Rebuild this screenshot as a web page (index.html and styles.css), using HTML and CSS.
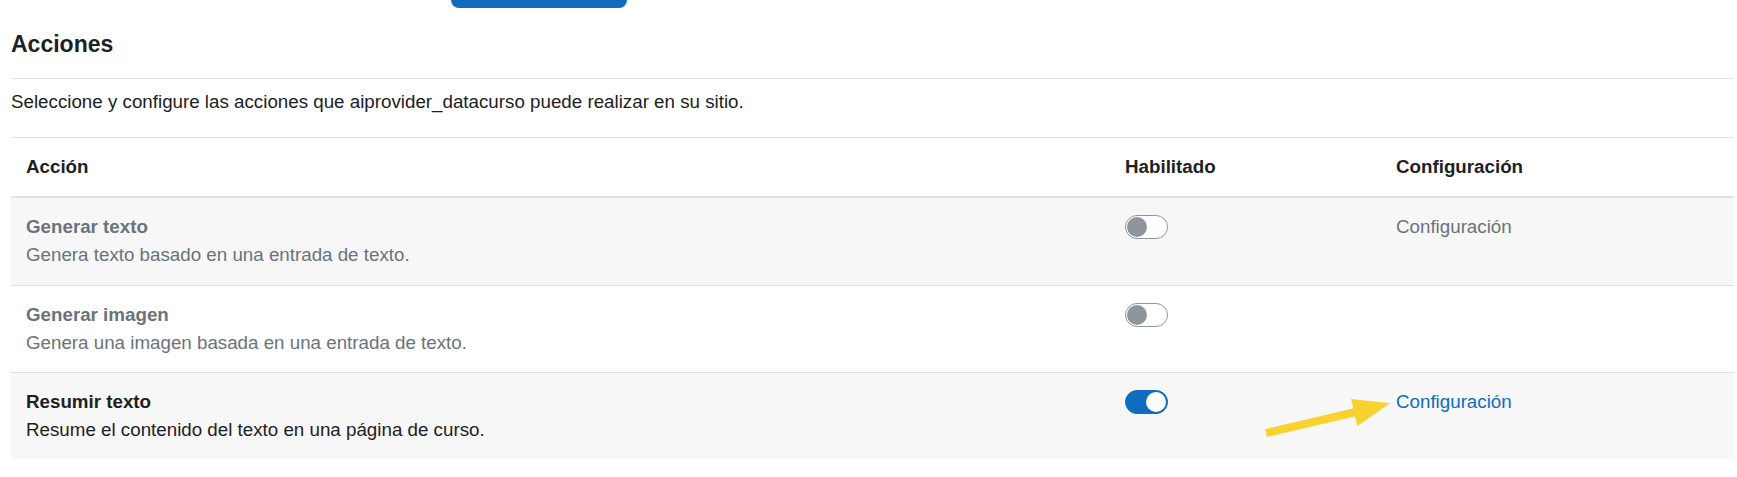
FILE: index.html
```html
<!DOCTYPE html>
<html lang="es">
<head>
<meta charset="utf-8">
<title>Acciones</title>
<link rel="stylesheet" href="styles.css">
</head>
<body>
<div class="page">
  <div class="topbtn"></div>
  <h3 class="title">Acciones</h3>
  <hr class="rule">
  <p class="intro">Seleccione y configure las acciones que aiprovider_datacurso puede realizar en su sitio.</p>
  <table class="actions">
    <colgroup>
      <col class="c1">
      <col class="c2">
      <col class="c3">
    </colgroup>
    <thead>
      <tr>
        <th>Acción</th>
        <th>Habilitado</th>
        <th>Configuración</th>
      </tr>
    </thead>
    <tbody>
      <tr class="striped off">
        <td><span class="name">Generar texto</span><span class="desc">Genera texto basado en una entrada de texto.</span></td>
        <td><div class="switchline"><span class="switch"><span class="knob"></span></span></div></td>
        <td><a class="cfg" href="#">Configuración</a></td>
      </tr>
      <tr class="off">
        <td><span class="name">Generar imagen</span><span class="desc">Genera una imagen basada en una entrada de texto.</span></td>
        <td><div class="switchline"><span class="switch"><span class="knob"></span></span></div></td>
        <td></td>
      </tr>
      <tr class="striped">
        <td><span class="name">Resumir texto</span><span class="desc">Resume el contenido del texto en una página de curso.</span></td>
        <td><div class="switchline"><span class="switch on"><span class="knob"></span></span></div></td>
        <td><a class="cfg" href="#">Configuración</a></td>
      </tr>
    </tbody>
  </table>
  <svg class="arrow" width="140" height="48" viewBox="0 0 140 48" aria-hidden="true">
    <line x1="11" y1="40" x2="101" y2="19" stroke="#f8d22e" stroke-width="8"/>
    <polygon points="96,6 135,10.3 102.3,33" fill="#f8d22e"/>
  </svg>
</div>
</body>
</html>
```

FILE: styles.css
```css
html, body {
  margin: 0;
  padding: 0;
  background: #ffffff;
}

body {
  font-family: "Liberation Sans", Arial, sans-serif;
  font-size: 18.75px;
  line-height: 28.125px;
  color: #1d2125;
}

.page {
  position: relative;
  padding: 0 3px 0 11px;
}

.topbtn {
  width: 176px;
  height: 8px;
  margin-left: 440px;
  background: #0f6cbf;
  border-radius: 0 0 8px 8px;
}

.title {
  margin: 23px 0 0;
  font-size: 23px;
  line-height: 27px;
  font-weight: bold;
  color: #1d2125;
}

.rule {
  margin: 20px 0 0;
  border: 0;
  border-top: 1px solid #dee2e6;
  height: 0;
}

.intro {
  margin: 9px 0 0;
}

.actions {
  margin-top: 21px;
  width: 1723px;
  border-collapse: collapse;
  table-layout: fixed;
  border-top: 1px solid #dee2e6;
}

.c1 { width: 1099px; }
.c2 { width: 271px; }
.c3 { width: 353px; }

.actions th {
  text-align: left;
  font-weight: bold;
  padding: 15px;
  border-bottom: 2px solid #dee2e6;
  vertical-align: bottom;
}

.actions td {
  padding: 15px;
  vertical-align: top;
  border-top: 1px solid #dee2e6;
}

.actions tbody tr:first-child td {
  border-top: 0;
}

.striped {
  background: #f7f7f7;
}

.name {
  display: block;
  font-weight: bold;
}

.desc {
  display: block;
}

.off .name,
.off .desc,
.off .cfg {
  color: #6a737b;
}

.cfg {
  color: #0f6cbf;
  text-decoration: none;
}

.switchline {
  height: 28.125px;
  display: flex;
  align-items: center;
}

.switch {
  box-sizing: border-box;
  width: 43px;
  height: 24px;
  padding: 1px;
  border: 1px solid #8f959e;
  border-radius: 12px;
  background: #ffffff;
  display: flex;
  align-items: center;
  justify-content: flex-start;
}

.knob {
  width: 20px;
  height: 20px;
  border-radius: 50%;
  background: #8f959e;
}

.switch.on {
  background: #0f6cbf;
  border-color: #0f6cbf;
  justify-content: flex-end;
}

.switch.on .knob {
  background: #ffffff;
}

.arrow {
  position: absolute;
  left: 1255px;
  top: 393px;
}
```
